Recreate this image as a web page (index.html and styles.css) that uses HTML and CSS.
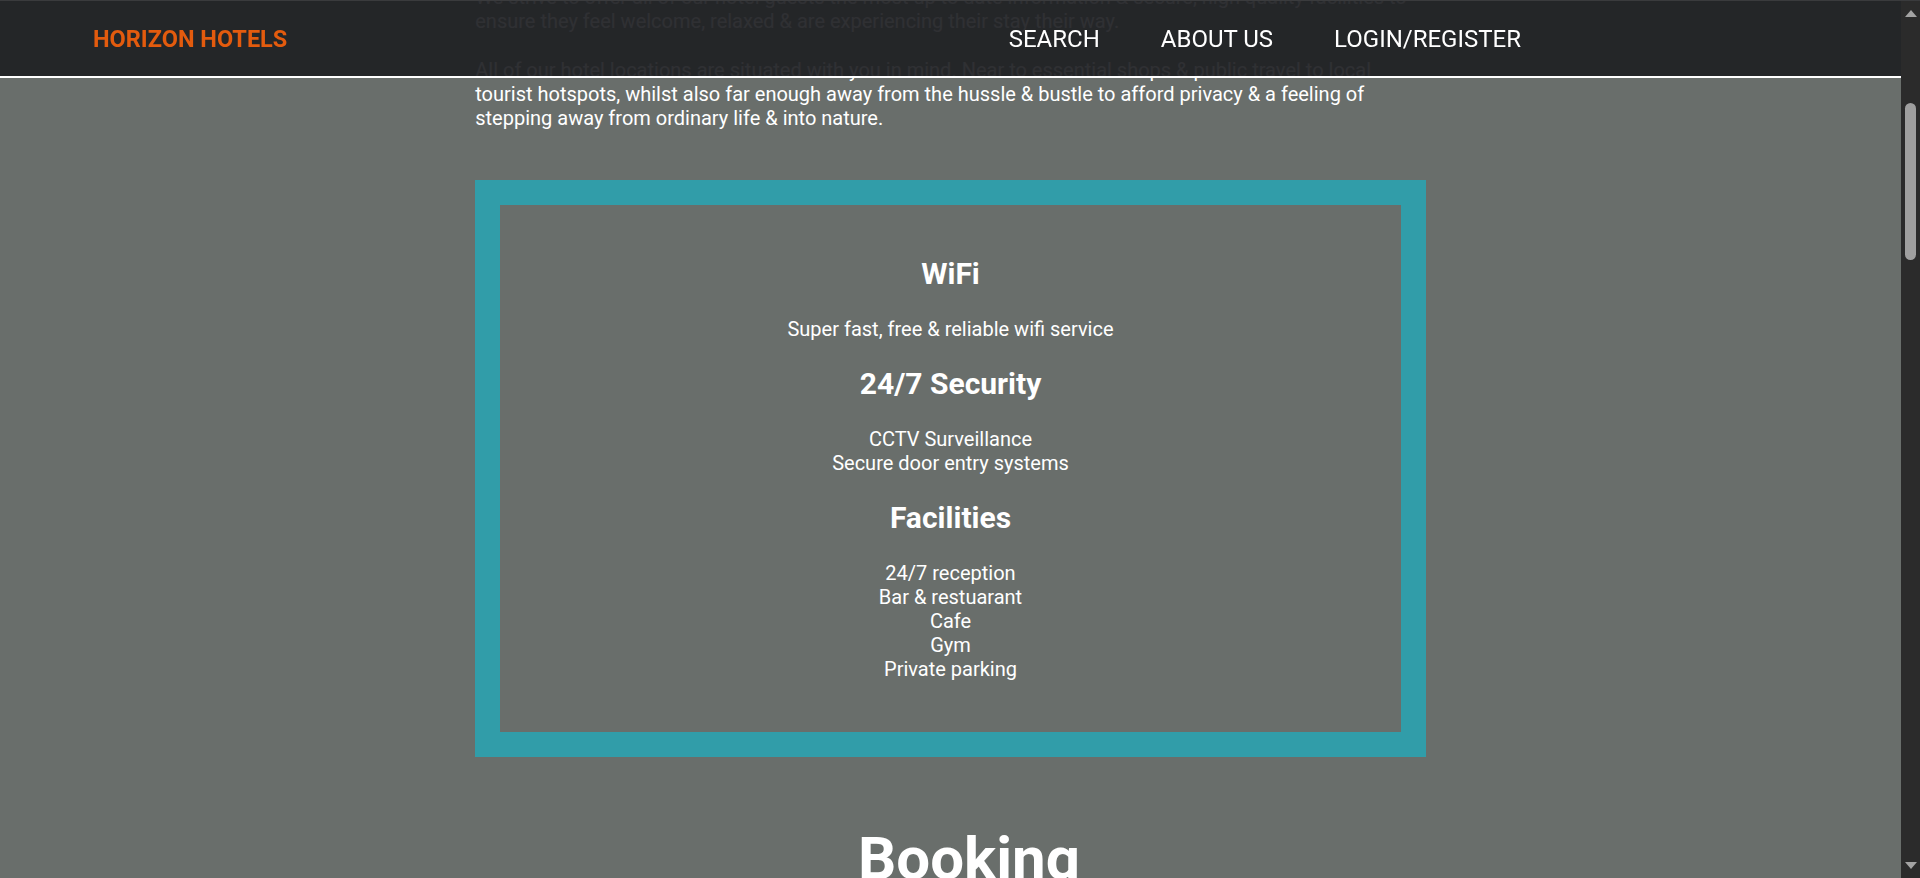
FILE: index.html
```html
<!DOCTYPE html>
<html lang="en">
<head>
<meta charset="utf-8">
<title>Horizon Hotels</title>
<link rel="stylesheet" href="styles.css">
</head>
<body>
<header class="site-header">
  <a class="logo" href="#">HORIZON HOTELS</a>
  <nav class="main-nav">
    <a href="#">SEARCH</a>
    <a href="#">ABOUT US</a>
    <a href="#">LOGIN/REGISTER</a>
  </nav>
</header>
<main class="content">
  <section class="intro">
    <p>We strive to offer all of our hotel guests the most up to date information &amp; secure, high quality facilities to ensure they feel welcome, relaxed &amp; are experiencing their stay their way.</p>
    <p>All of our hotel locations are situated with you in mind. Near to essential shops &amp; public travel to local tourist hotspots, whilst also far enough away from the hussle &amp; bustle to afford privacy &amp; a feeling of stepping away from ordinary life &amp; into nature.</p>
  </section>
  <section class="features">
    <h2>WiFi</h2>
    <p>Super fast, free &amp; reliable wifi service</p>
    <h2>24/7 Security</h2>
    <p>CCTV Surveillance<br>Secure door entry systems</p>
    <h2>Facilities</h2>
    <p>24/7 reception<br>Bar &amp; restuarant<br>Cafe<br>Gym<br>Private parking</p>
  </section>
  <section class="booking">
    <h1>Booking</h1>
  </section>
</main>
<div class="scrollbar" aria-hidden="true">
  <span class="sb-arrow sb-up"></span>
  <span class="sb-thumb"></span>
  <span class="sb-arrow sb-down"></span>
</div>
</body>
</html>
```
FILE: styles.css
```css
body {
  margin: 0 19px 0 0;
  background: #696e6b;
  color: #ffffff;
  font-family: Roboto, "Liberation Sans", sans-serif;
  font-size: 20px;
  line-height: 1.2;
}

a {
  text-decoration: none;
}

.site-header {
  position: fixed;
  top: 0;
  left: 0;
  right: 19px;
  height: 73px;
  display: flex;
  align-items: center;
  padding: 2px 0 0 93px;
  background: rgba(31, 32, 36, 0.93);
  border-top: 1px solid #3a3b3d;
  border-bottom: 2px solid #ffffff;
  z-index: 10;
}

.logo {
  color: #e35b0e;
  font-size: 23.5px;
  font-weight: 700;
}

.main-nav {
  display: flex;
  gap: 61px;
  margin-left: auto;
  margin-right: 380px;
}

.main-nav a {
  color: #ffffff;
  font-size: 24px;
}

.content {
  width: 50%;
  margin: -15px auto 0;
}

.intro p {
  margin: 0 0 25px;
}

.intro p:last-child {
  margin-bottom: 0;
}

.features {
  margin-top: 50px;
  border: 25px solid #319da9;
  padding: 26px 25px 31px;
  text-align: center;
}

.features h2 {
  font-size: 30px;
  margin: 25px 0;
}

.features p {
  margin: 20px 0;
}

.booking {
  text-align: center;
  padding-left: 37px;
  min-height: 600px;
}

.booking h1 {
  font-size: 60px;
  margin: 66px 0 40px;
}

.scrollbar {
  position: fixed;
  top: 0;
  right: 0;
  bottom: 0;
  width: 19px;
  background: #2b2b2b;
  border-top: 1px solid #3a3b3d;
  z-index: 20;
}

.sb-thumb {
  position: absolute;
  left: 4px;
  top: 102px;
  width: 11px;
  height: 157px;
  border-radius: 6px;
  background: #9f9f9f;
}

.sb-arrow {
  position: absolute;
  left: 4px;
  width: 0;
  height: 0;
  border-left: 6px solid transparent;
  border-right: 6px solid transparent;
}

.sb-up {
  top: 9px;
  border-bottom: 7px solid #a3a3a3;
}

.sb-down {
  bottom: 9px;
  border-top: 7px solid #a3a3a3;
}
```
